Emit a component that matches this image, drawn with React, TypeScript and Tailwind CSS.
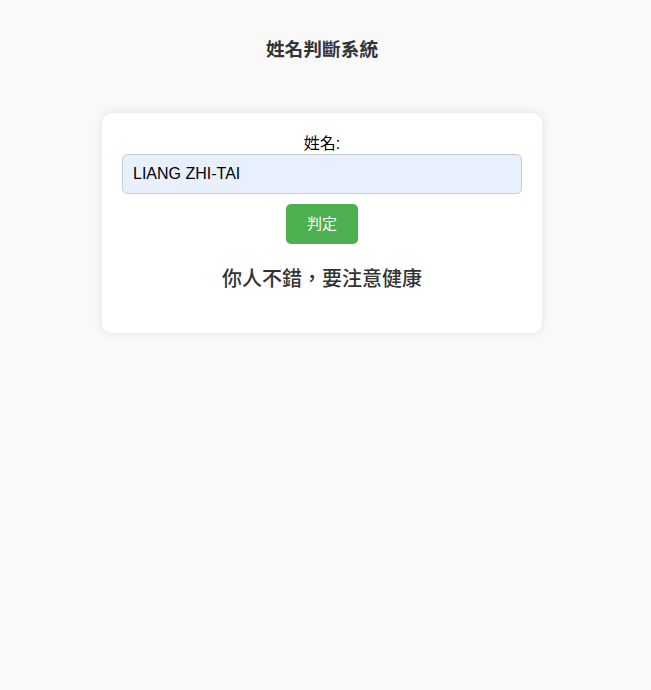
import React, { useState } from 'react';

const cjk = "font-['Liberation_Sans','Noto_Sans_CJK_TC',sans-serif]";

const App = () => {
  const [name, setName] = useState('LIANG ZHI-TAI');

  return (
    <div className={`min-h-[690px] bg-[#f9f9f9] pr-[7px] ${cjk} text-[#333]`}>
      <h3 className="pt-[38px] text-center text-[18.72px] font-bold leading-[24px] text-[#333]">
        姓名判斷系統
      </h3>

      <div className="mx-auto mt-[51px] w-[440px] rounded-[10px] bg-white p-5 text-center shadow-[0_0_10px_rgba(0,0,0,0.1)]">
        <label className="block text-base leading-[21px] text-black">姓名:</label>
        <input
          value={name}
          onChange={(e) => setName(e.target.value)}
          className="block h-10 w-[400px] rounded-[5px] border border-[#ccc] bg-[#e8f0fe] px-[10px] text-base text-black outline-none"
        />
        <button className="mx-auto mt-[10px] block h-10 w-[72px] rounded-[5px] bg-[#4caf50] text-[15px] text-white">
          判定
        </button>
        <p className="mb-5 mt-[21px] text-[20px] font-medium leading-[28px] text-[#333]">
          你人不錯，要注意健康
        </p>
      </div>
    </div>
  );
};

export default App;
